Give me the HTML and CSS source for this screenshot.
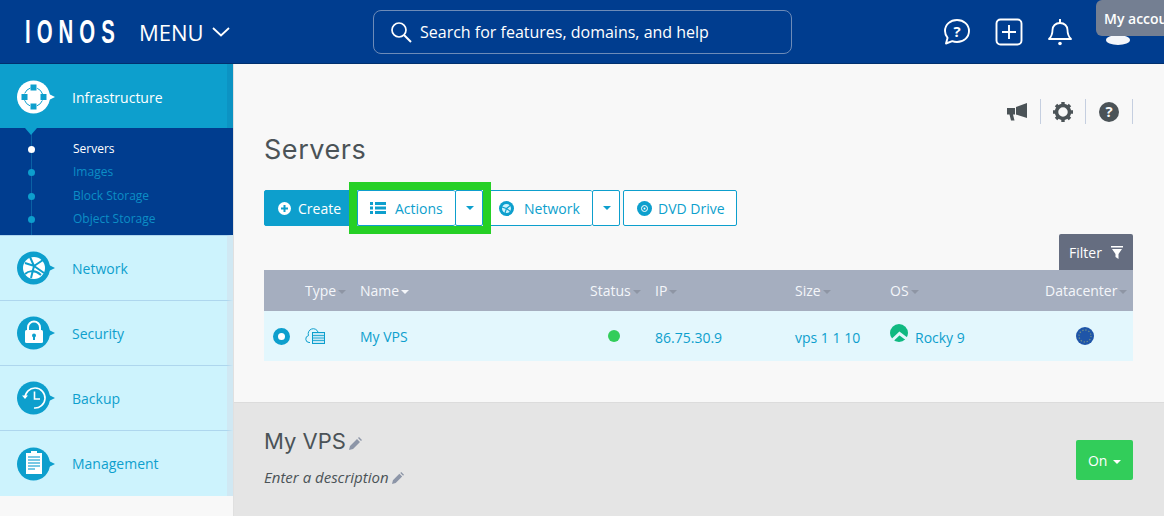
FILE: index.html
```html
<!DOCTYPE html>
<html lang="en">
<head>
    <meta charset="UTF-8">
    <title>Servers</title>
    <link rel="stylesheet" href="styles.css">
</head>
<body>
    <div class="topbar">
        <div class="logo">IONOS</div>
        <div class="menu">MENU
            <svg width="18" height="10" viewBox="0 0 18 10"><path d="M1 1l8 7.5L17 1" fill="none" stroke="#fff" stroke-width="1.8"/></svg>
        </div>
        <div class="search">
            <svg width="22" height="22" viewBox="0 0 22 22"><circle cx="9" cy="9" r="7" fill="none" stroke="#fff" stroke-width="1.7"/><path d="M14 14l7 7" stroke="#fff" stroke-width="1.9"/></svg>
            <span>Search for features, domains, and help</span>
        </div>
        <div class="top-icons">
            <svg width="28" height="28" viewBox="0 0 28 28"><path d="M14 2c6.800 0 12 4.800 12 11s-5.200 11-12 11c-1.700 0-3.300-.3-4.700-.9L3 25.500l1.600-5.700C2.900 17.800 2 15.500 2 13 2 6.800 7.200 2 14 2z" fill="none" stroke="#fff" stroke-width="1.900" stroke-linejoin="round"/><text x="14" y="18.500" class="q">?</text></svg>
            <svg width="28" height="28" viewBox="0 0 28 28"><rect x="1.500" y="1.500" width="25" height="25" rx="4" fill="none" stroke="#fff" stroke-width="1.900"/><path d="M14 7v14M7 14h14" stroke="#fff" stroke-width="1.900"/></svg>
            <svg width="26" height="28" viewBox="0 0 26 28"><path d="M2 21c3-3 3.500-5 3.500-9 0-4 3-7 7.500-7s7.500 3 7.500 7c0 4 .5 6 3.500 9z" fill="none" stroke="#fff" stroke-width="1.800" stroke-linejoin="round"/><path d="M13 1v4" stroke="#fff" stroke-width="2"/><circle cx="13" cy="25.500" r="1.800" fill="#fff"/></svg>
        </div>
        <div class="avatar"></div>
        <div class="account-tip">My account</div>
    </div>

    <div class="layout">
        <div class="sidebar">
            <div class="nav-item active">
                <svg class="nav-icon" width="40" height="36" viewBox="0 0 40 36"><circle cx="16.500" cy="18" r="16.500" fill="#fff"/><path d="M32 15l6 3-6 3z" fill="#fff"/><circle cx="16.500" cy="18" r="9.500" fill="none" stroke="#0d9fcd" stroke-width="1" stroke-dasharray="8 6.920" stroke-dashoffset="-3.500"/><rect x="13.500" y="5.500" width="6" height="6" fill="#0d9fcd"/><rect x="13.500" y="24.500" width="6" height="6" fill="#0d9fcd"/><rect x="4.500" y="15" width="6" height="6" fill="#0d9fcd"/><rect x="23.500" y="15" width="6" height="6" fill="#0d9fcd"/></svg>
                <span>Infrastructure</span>
            </div>
            <div class="subnav">
                <div class="sub-item current">Servers</div>
                <div class="sub-item">Images</div>
                <div class="sub-item">Block Storage</div>
                <div class="sub-item">Object Storage</div>
            </div>
            <div class="nav-item">
                <svg class="nav-icon" width="40" height="36" viewBox="0 0 40 36"><circle cx="16.500" cy="18" r="16.500" fill="#0d9fcd"/><path d="M32 15l6 3-6 3z" fill="#0d9fcd"/><circle cx="17" cy="18" r="11" fill="#fff"/><path d="M8 13l9 3 9-6M17 16l-3 12M17 16l10 7M8 24c3-3 9-5 16 1M13 7l4 9" stroke="#0d9fcd" stroke-width="2" fill="none"/></svg>
                <span>Network</span>
            </div>
            <div class="nav-item">
                <svg class="nav-icon" width="40" height="36" viewBox="0 0 40 36"><circle cx="16.500" cy="18" r="16.500" fill="#0d9fcd"/><path d="M32 15l6 3-6 3z" fill="#0d9fcd"/><path d="M11 16v-3.500a6 6 0 0 1 12 0V16" fill="none" stroke="#fff" stroke-width="2"/><rect x="8" y="15" width="18" height="13" rx="1.500" fill="#fff"/><circle cx="17" cy="20.500" r="2" fill="#0d9fcd"/><rect x="16" y="21" width="2" height="4" fill="#0d9fcd"/></svg>
                <span>Security</span>
            </div>
            <div class="nav-item">
                <svg class="nav-icon" width="40" height="36" viewBox="0 0 40 36"><circle cx="16.500" cy="18" r="16.500" fill="#0d9fcd"/><path d="M32 15l6 3-6 3z" fill="#0d9fcd"/><path d="M8 18a10 10 0 1 1 9 10" fill="none" stroke="#fff" stroke-width="1.600"/><path d="M5 15.500l3 3.500 3-3.500z" fill="#fff"/><path d="M17.500 11.500v7.500h5.500" fill="none" stroke="#fff" stroke-width="1.600"/></svg>
                <span>Backup</span>
            </div>
            <div class="nav-item">
                <svg class="nav-icon" width="40" height="36" viewBox="0 0 40 36"><circle cx="16.500" cy="18" r="16.500" fill="#0d9fcd"/><path d="M32 15l6 3-6 3z" fill="#0d9fcd"/><rect x="9" y="7" width="16" height="21" fill="#fff"/><rect x="14" y="5" width="6" height="3" fill="#fff"/><path d="M11 11h12M11 14h12M11 17h12M11 20h12M11 23h7" stroke="#4db6dd" stroke-width="1.300"/></svg>
                <span>Management</span>
            </div>
        </div>

        <div class="main">
            <div class="upper">
                <div class="tools">
                    <div class="tool">
                        <svg width="22" height="20" viewBox="0 0 22 20"><path d="M21 1v15L10 12.500V5z" fill="#4b5357"/><path d="M1 6h8v6.500H7l1.500 6H5l-1.500-6H1z" fill="#4b5357"/></svg>
                    </div>
                    <div class="tool">
                        <svg width="20" height="20" viewBox="0 0 20 20"><circle cx="10" cy="10" r="6.500" fill="none" stroke="#4b5357" stroke-width="3.500"/><path d="M10 0v4M10 16v4M0 10h4M16 10h4M3 3l3 3M14 14l3 3M17 3l-3 3M6 14l-3 3" stroke="#4b5357" stroke-width="3.400"/></svg>
                    </div>
                    <div class="tool">
                        <svg width="20" height="20" viewBox="0 0 20 20"><circle cx="10" cy="10" r="10" fill="#4b5357"/><text x="10" y="15" class="help">?</text></svg>
                    </div>
                </div>
                <h1 class="title">Servers</h1>
                <div class="toolbar">
                    <button class="btn primary">
                        <svg width="13" height="13" viewBox="0 0 13 13"><circle cx="6.500" cy="6.500" r="6.500" fill="#fff"/><path d="M6.500 3v7M3 6.500h7" stroke="#0d9fcd" stroke-width="2"/></svg>
                        Create
                    </button>
                    <div class="btn-group highlighted">
                        <button class="btn actions">
                            <svg width="16" height="12" viewBox="0 0 16 12"><path d="M0 0h3v3H0zM5 0h11v3H5zM0 4.500h3v3H0zM5 4.500h11v3H5zM0 9h3v3H0zM5 9h11v3H5z" fill="#0d9fcd"/></svg>
                            Actions
                        </button>
                        <button class="btn caret"><i></i></button>
                    </div>
                    <div class="btn-group">
                        <button class="btn network">
                            <svg width="15" height="15" viewBox="0 0 15 15"><circle cx="7.500" cy="7.500" r="7.500" fill="#0d9fcd"/><circle cx="7.500" cy="7.500" r="4.500" fill="#cdf3fd"/><path d="M3 6l4.500 1.500L12 4M7.500 7.500L6 12M7.500 7.500l4 3" stroke="#0d9fcd" stroke-width="1.200" fill="none"/></svg>
                            Network
                        </button>
                        <button class="btn caret"><i></i></button>
                    </div>
                    <button class="btn dvd">
                        <svg width="15" height="15" viewBox="0 0 15 15"><circle cx="7.500" cy="7.500" r="7.500" fill="#0d9fcd"/><circle cx="7.500" cy="7.500" r="3" fill="none" stroke="#fff"/><circle cx="7.500" cy="7.500" r="1" fill="#fff"/></svg>
                        DVD Drive
                    </button>
                </div>
                <div class="filter-row">
                    <div class="filter">Filter
                        <svg width="12" height="13" viewBox="0 0 12 13"><path d="M0 0h12v1.500H0zM1 3h10L7.500 8v5l-3-2V8z" fill="#fff"/></svg>
                    </div>
                </div>
                <div class="row head">
                    <div></div>
                    <div>Type<i class="sort"></i></div>
                    <div>Name<i class="sort light"></i></div>
                    <div>Status<i class="sort"></i></div>
                    <div>IP<i class="sort"></i></div>
                    <div>Size<i class="sort"></i></div>
                    <div>OS<i class="sort"></i></div>
                    <div>Datacenter<i class="sort"></i></div>
                </div>
                <div class="row body">
                    <div class="radio"></div>
                    <div>
                        <svg class="type-icon" width="20" height="16" viewBox="0 0 20 16"><path d="M5 14.500H4a3.500 3.500 0 0 1-.5-6.900A5 5 0 0 1 13 4" fill="none" stroke="#0d9fcd"/><rect x="7.500" y="4.500" width="12" height="11" fill="#c5e8f5" stroke="#0d9fcd"/><path d="M8 7.500h11M8 10h11M8 12.500h11" stroke="#0d9fcd" stroke-width=".8"/></svg>
                    </div>
                    <div>My VPS</div>
                    <div><span class="dot"></span></div>
                    <div class="low">86.75.30.9</div>
                    <div class="low">vps 1 1 10</div>
                    <div class="os low">
                        <svg width="18" height="18" viewBox="0 0 18 18"><circle cx="9" cy="9" r="9" fill="#10b981"/><path d="M2.500 16L9.500 9.500l8 6" fill="none" stroke="#e3f7fd" stroke-width="3"/></svg>
                        Rocky 9
                    </div>
                    <div class="dc">
                        <svg width="18" height="18" viewBox="0 0 18 18"><circle cx="9" cy="9" r="9" fill="#1f55a8"/><circle cx="9" cy="9" r="6" fill="none" stroke="#6f8f8a" stroke-width="1.300" stroke-dasharray="1.300 1.800"/></svg>
                    </div>
                </div>
            </div>
            <div class="detail">
                <div>
                    <h2 class="detail-name">My VPS<svg class="pencil" width="13" height="13" viewBox="0 0 13 13"><path d="M0 13l1-4 7-7 3 3-7 7zM9 1l1-1 3 3-1 1z" fill="#8d96a8"/></svg></h2>
                    <div class="detail-desc">Enter a description<svg class="pencil" width="12" height="12" viewBox="0 0 13 13"><path d="M0 13l1-4 7-7 3 3-7 7zM9 1l1-1 3 3-1 1z" fill="#8d96a8"/></svg></div>
                </div>
                <button class="power">On <i></i></button>
            </div>
        </div>
    </div>
</body>
</html>
```

FILE: styles.css
```css
html, body {
    height: 100%;
    margin: 0;
    overflow: hidden;
}
body {
    font-family: "Open Sans", sans-serif;
    font-size: 14px;
    background-color: #f8f8f8;
}

/* top bar */
.topbar {
    position: relative;
    display: flex;
    align-items: center;
    box-sizing: border-box;
    height: 64px;
    padding-left: 25px;
    border-bottom: 1px solid #00306f;
    background-color: #003d8f;
    color: white;
    overflow: hidden;
}
.logo {
    width: 114px;
    font-family: "Liberation Sans", sans-serif;
    font-size: 34px;
    font-weight: bold;
    letter-spacing: 10px;
    white-space: nowrap;
    transform: scaleX(0.6);
    transform-origin: left center;
}
.menu {
    display: flex;
    align-items: center;
    gap: 8px;
    width: 234px;
    font-size: 22px;
}
.search {
    display: flex;
    align-items: center;
    gap: 8px;
    box-sizing: border-box;
    width: 419px;
    height: 44px;
    padding-left: 16px;
    border: 1px solid #6d8bb8;
    border-radius: 8px;
    font-size: 16px;
}
.top-icons {
    display: flex;
    align-items: center;
    gap: 24px;
    margin-left: 151px;
}
.top-icons .q {
    fill: white;
    font-size: 15px;
    font-weight: bold;
    text-anchor: middle;
}
.avatar {
    position: absolute;
    top: 35px;
    left: 1106px;
    width: 24px;
    height: 10px;
    border-radius: 50%;
    background-color: #f4f6fa;
}
.account-tip {
    position: absolute;
    top: 0;
    left: 1096px;
    width: 90px;
    height: 36px;
    padding-left: 8px;
    border-radius: 6px;
    background-color: #747f92;
    font-size: 14px;
    font-weight: 600;
    line-height: 38px;
    white-space: nowrap;
}

.layout {
    display: flex;
    height: 452px;
}

/* sidebar */
.sidebar {
    flex: none;
    width: 233px;
    border-right: 1px solid #e0e0e0;
}
.nav-item {
    display: flex;
    align-items: center;
    box-sizing: border-box;
    height: 65px;
    padding-left: 17px;
    border-top: 1px solid #aed6ee;
    border-right: 6px solid #d0e8f3;
    background-color: #cdf3fd;
    color: #0d9fcd;
    font-size: 14px;
}
.nav-item:last-child {
    height: 66px;
}
.nav-item span {
    margin-left: 15px;
}
.nav-item.active {
    position: relative;
    height: 64px;
    padding-top: 2px;
    border-top: none;
    border-right-color: #0c93c3;
    background-color: #0d9fcd;
    color: white;
}
.nav-item.active::after {
    content: "";
    position: absolute;
    left: 25px;
    bottom: -7px;
    border: 6px solid transparent;
    border-bottom: none;
    border-top-color: #0d9fcd;
    border-top-width: 7px;
}
.subnav {
    height: 107px;
    padding-top: 9px;
    box-sizing: border-box;
    background: linear-gradient(#0b62a5, #0b62a5) 31px 0 / 1px 100% no-repeat #003d8f;
}
.sub-item {
    position: relative;
    height: 23.400px;
    padding-left: 73px;
    color: #0c8ec6;
    font-size: 12px;
    line-height: 23px;
}
.sub-item::before {
    content: "";
    position: absolute;
    left: 28px;
    top: 9px;
    width: 7px;
    height: 7px;
    border-radius: 50%;
    background-color: #0d9fcd;
}
.sub-item.current {
    color: white;
}
.sub-item.current::before {
    background-color: white;
}

/* main */
.main {
    flex: 1;
    display: flex;
    flex-direction: column;
}
.upper {
    height: 338px;
    box-sizing: border-box;
    padding: 35px 31px 0 30px;
}
.tools {
    display: flex;
    justify-content: flex-end;
    height: 25px;
}
.tool {
    display: flex;
    align-items: center;
    justify-content: center;
    width: 46px;
    border-right: 1px solid #c5cfe0;
}
.tool:nth-child(2) {
    width: 44px;
}
.tools .help {
    fill: #f8f8f8;
    font-size: 15px;
    font-weight: bold;
    text-anchor: middle;
}
.title {
    height: 66px;
    margin: 0;
    color: #4b5357;
    font-family: "Inter", sans-serif;
    font-size: 27px;
    font-weight: 400;
    letter-spacing: 0.55px;
    line-height: 52px;
}
.toolbar {
    display: flex;
    height: 36px;
}
.btn {
    display: flex;
    align-items: center;
    gap: 7px;
    box-sizing: border-box;
    height: 36px;
    padding: 0;
    border: 1px solid #0d9fcd;
    border-radius: 2px;
    background-color: white;
    color: #0d9fcd;
    font-family: "Open Sans", sans-serif;
    font-size: 14px;
    cursor: pointer;
}
.btn.primary {
    width: 93px;
    padding-left: 13px;
    background-color: #0d9fcd;
    color: white;
}
.btn-group {
    display: flex;
}
.btn-group.highlighted {
    position: relative;
    z-index: 1;
    outline: 8px solid #26d026;
}
.btn.actions {
    width: 98px;
    padding-left: 12px;
    gap: 9px;
    border-right: none;
}
.btn.network {
    width: 109px;
    padding-left: 16px;
    gap: 10px;
    border-right: none;
    border-left: none;
}
.btn.caret {
    justify-content: center;
    width: 28px;
    padding-left: 2px;
}
.btn.caret i {
    border: 4px solid transparent;
    border-bottom: none;
    border-top-color: #0d9fcd;
}
.btn.dvd {
    width: 114px;
    margin-left: 3px;
    padding-left: 13px;
    gap: 6px;
}

.filter-row {
    display: flex;
    justify-content: flex-end;
    margin-top: 8px;
}
.filter {
    display: flex;
    align-items: center;
    gap: 9px;
    box-sizing: border-box;
    width: 74px;
    height: 36px;
    padding-left: 10px;
    border-radius: 2px 2px 0 0;
    background-color: #656d80;
    color: white;
}

/* server table */
.row {
    display: grid;
    grid-template-columns: 41px 55px 230px 65px 140px 95px 155px 88px;
    align-items: center;
}
.row.head {
    height: 41px;
    background-color: #a5aebf;
    color: #f4f6fa;
}
.row.body {
    height: 50px;
    background-color: #e3f7fd;
    color: #0d9fcd;
}
.low {
    padding-top: 2px;
}
.sort {
    display: inline-block;
    margin-left: 2px;
    vertical-align: middle;
    border: 4px solid transparent;
    border-bottom: none;
    border-top-color: #8e95a4;
}
.sort.light {
    border-top-color: #f4f6fa;
}
.radio {
    box-sizing: border-box;
    width: 17px;
    height: 17px;
    margin-left: 9px;
    border: 5px solid #0d9fcd;
    border-radius: 50%;
    background-color: white;
}
.type-icon {
    display: block;
}
.dot {
    display: block;
    width: 12px;
    height: 12px;
    margin-left: 18px;
    border-radius: 50%;
    background-color: #32cd5a;
}
.os {
    display: flex;
    align-items: center;
    gap: 7px;
}
.os svg {
    margin-top: -8px;
}
.dc {
    padding-left: 31px;
}
.dc svg {
    display: block;
}

/* details panel */
.detail {
    flex: 1;
    display: flex;
    justify-content: space-between;
    padding: 21px 31px 0 30px;
    border-top: 1px solid #dcdcdc;
    background-color: #e5e5e5;
    color: #4b5357;
}
.detail-name {
    margin: 0;
    font-family: "Inter", sans-serif;
    font-size: 22px;
    font-weight: 400;
    line-height: 34px;
}
.detail-desc {
    margin-top: 9px;
    font-size: 15px;
    font-style: italic;
}
.pencil {
    margin-left: 3px;
    vertical-align: -1px;
}
.power {
    width: 57px;
    height: 40px;
    margin-top: 16px;
    border: none;
    border-radius: 2px;
    background-color: #32cd5a;
    color: white;
    font-family: "Open Sans", sans-serif;
    font-size: 14px;
    cursor: pointer;
}
.power i {
    display: inline-block;
    margin-left: 2px;
    vertical-align: middle;
    border: 4px solid transparent;
    border-bottom: none;
    border-top-color: white;
}
```
